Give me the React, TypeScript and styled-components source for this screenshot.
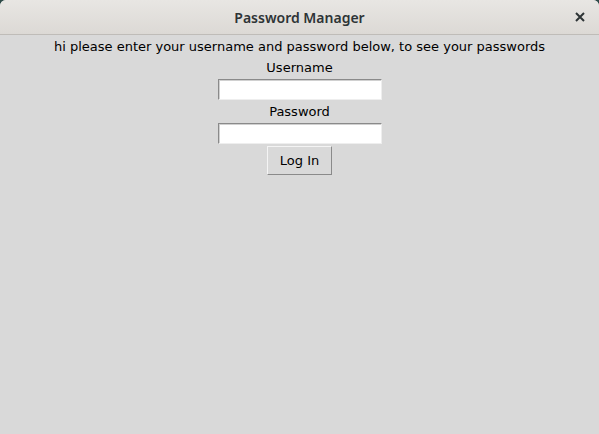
import React from "react";
import styled, { createGlobalStyle } from "styled-components";

const Global = createGlobalStyle`
  html, body { margin: 0; padding: 0; background: #2d4a48; }
  #root { width: 599px; height: 434px; }
`;

const Window = styled.div`
  width: 599px;
  height: 434px;
  display: flex;
  flex-direction: column;
  background: #d9d9d9;
  border-radius: 6px 6px 0 0;
  overflow: hidden;
`;

const TitleBar = styled.div`
  position: relative;
  height: 35px;
  flex: none;
  display: flex;
  align-items: center;
  justify-content: center;
  background: linear-gradient(#e8e6e3, #dcd9d5);
  border-bottom: 1px solid #bfbcb8;
  box-sizing: border-box;
  font-family: "Noto Sans", "DejaVu Sans", sans-serif;
  font-weight: 600;
  font-size: 14px;
  color: #2e3436;
`;

const CloseButton = styled.div`
  position: absolute;
  right: 14px;
  top: 12px;
  width: 10px;
  height: 10px;
  display: flex;
`;

const Body = styled.div`
  display: flex;
  flex-direction: column;
  align-items: center;
  padding-top: 1px;
  font-family: "DejaVu Sans", sans-serif;
  font-size: 13px;
  color: #000;
`;

const Label = styled.div`
  height: 21px;
  line-height: 21px;
  white-space: nowrap;
`;

const Entry = styled.div`
  width: 164px;
  height: 21px;
  box-sizing: border-box;
  background: #fff;
  border-top: 1px solid #8a8a8a;
  border-left: 1px solid #8a8a8a;
  border-right: 1px solid #eeeeee;
  border-bottom: 1px solid #eeeeee;
  box-shadow: inset 1px 1px 0 #d0d0d0;
  margin: 1px 0 1px;
`;

const Button = styled.div`
  margin-top: 1px;
  width: 65px;
  height: 29px;
  box-sizing: border-box;
  display: flex;
  align-items: center;
  justify-content: center;
  border: 1px solid #8a8a8a;
  border-top-color: #f4f4f4;
  border-left-color: #f4f4f4;
  background: #d9d9d9;
`;

export default function App() {
  return (
    <>
      <Global />
      <Window>
        <TitleBar>
          Password Manager
          <CloseButton>
            <svg width="10" height="10" viewBox="0 0 10 10">
              <path d="M1 1 L9 9 M9 1 L1 9" stroke="#2e3436" strokeWidth="2" />
            </svg>
          </CloseButton>
        </TitleBar>
        <Body>
          <Label>hi please enter your username and password below, to see your passwords</Label>
          <Label>Username</Label>
          <Entry />
          <Label>Password</Label>
          <Entry />
          <Button>Log In</Button>
        </Body>
      </Window>
    </>
  );
}
